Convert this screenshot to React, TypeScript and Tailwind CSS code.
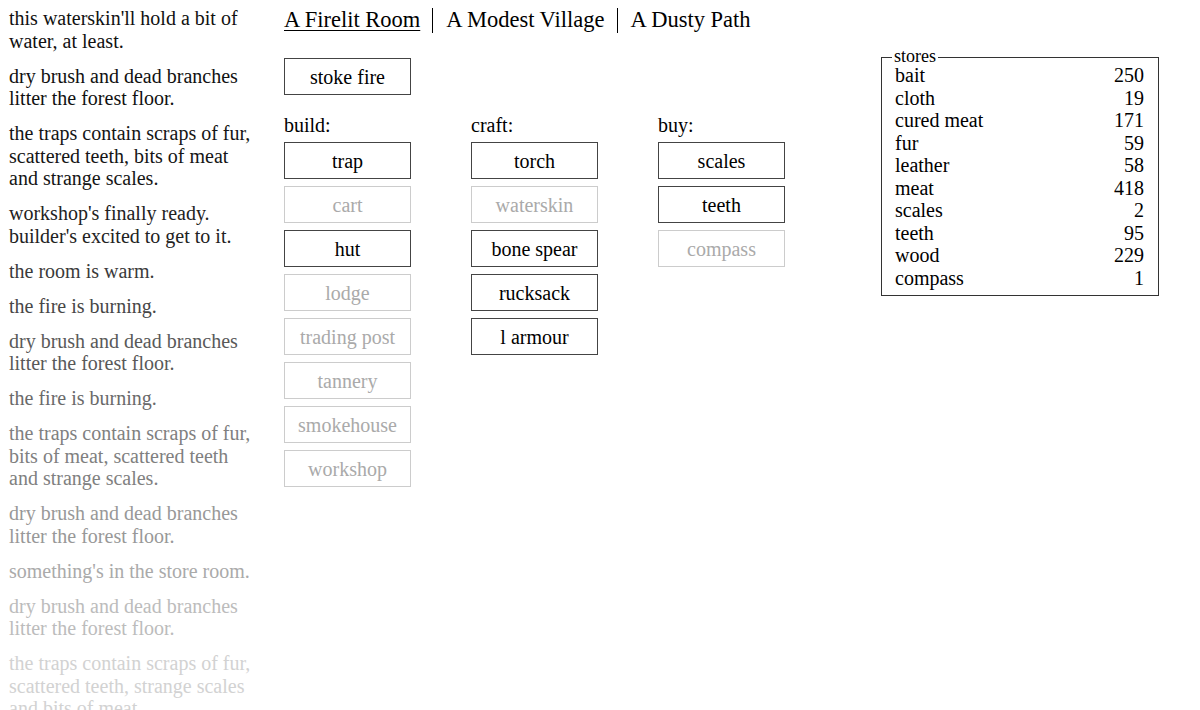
const notes: { text: string; color: string }[] = [
	{ text: "this waterskin'll hold a bit of water, at least.", color: "text-[#111]" },
	{ text: "dry brush and dead branches litter the forest floor.", color: "text-[#111]" },
	{ text: "the traps contain scraps of fur, scattered teeth, bits of meat and strange scales.", color: "text-[#151515]" },
	{ text: "workshop's finally ready. builder's excited to get to it.", color: "text-[#222]" },
	{ text: "the room is warm.", color: "text-[#3a3a3a]" },
	{ text: "the fire is burning.", color: "text-[#474747]" },
	{ text: "dry brush and dead branches litter the forest floor.", color: "text-[#595959]" },
	{ text: "the fire is burning.", color: "text-[#6a6a6a]" },
	{ text: "the traps contain scraps of fur, bits of meat, scattered teeth and strange scales.", color: "text-[#808080]" },
	{ text: "dry brush and dead branches litter the forest floor.", color: "text-[#989898]" },
	{ text: "something's in the store room.", color: "text-[#aaa]" },
	{ text: "dry brush and dead branches litter the forest floor.", color: "text-[#bcbcbc]" },
	{ text: "the traps contain scraps of fur, scattered teeth, strange scales and bits of meat.", color: "text-[#d2d2d2]" },
];

type Btn = { label: string; off?: boolean };

const build: Btn[] = [
	{ label: "trap" },
	{ label: "cart", off: true },
	{ label: "hut" },
	{ label: "lodge", off: true },
	{ label: "trading post", off: true },
	{ label: "tannery", off: true },
	{ label: "smokehouse", off: true },
	{ label: "workshop", off: true },
];

const craft: Btn[] = [
	{ label: "torch" },
	{ label: "waterskin", off: true },
	{ label: "bone spear" },
	{ label: "rucksack" },
	{ label: "l armour" },
];

const buy: Btn[] = [
	{ label: "scales" },
	{ label: "teeth" },
	{ label: "compass", off: true },
];

const stores: [string, number][] = [
	["bait", 250],
	["cloth", 19],
	["cured meat", 171],
	["fur", 59],
	["leather", 58],
	["meat", 418],
	["scales", 2],
	["teeth", 95],
	["wood", 229],
	["compass", 1],
];

function Button({ label, off }: Btn) {
	return (
		<div
			className={
				off
					? "flex h-[37px] w-[127px] items-center justify-center border border-[#ccc] text-[20px] text-[#aaa]"
					: "flex h-[37px] w-[127px] items-center justify-center border border-[#444] text-[20px] text-black"
			}
		>
			{label}
		</div>
	);
}

function Column({ title, items }: { title: string; items: Btn[] }) {
	return (
		<div className="flex w-[187px] flex-col">
			<div className="mb-[6px] h-[22px] text-[20px] leading-[22px]">{title}</div>
			<div className="flex flex-col gap-[7px]">
				{items.map((b) => (
					<Button key={b.label} {...b} />
				))}
			</div>
		</div>
	);
}

export default function App() {
	return (
		<div className="flex h-[710px] w-[1200px] overflow-hidden bg-white font-['Liberation_Serif',serif] text-black">
			<div className="w-[275px] shrink-0 pl-[9px] pt-[7px]">
				<div className="w-[248px]">
					{notes.map((n, i) => (
						<p key={i} className={`mb-[12.5px] text-[20px] leading-[22.5px] ${n.color}`}>
							{n.text}
						</p>
					))}
				</div>
			</div>

			<div className="flex w-[606px] shrink-0 flex-col pl-[9px] pt-[7px]">
				<div className="flex h-[26px] items-center text-[22.5px] leading-[26px]">
					<span className="underline decoration-1 underline-offset-[3px]">A Firelit Room</span>
					<span className="ml-[12px] mr-[13px] h-[25px] w-px bg-black" />
					<span>A Modest Village</span>
					<span className="ml-[12px] mr-[13px] h-[25px] w-px bg-black" />
					<span>A Dusty Path</span>
				</div>
				<div className="mt-[25px]">
					<Button label="stoke fire" />
				</div>
				<div className="mt-[19px] flex">
					<Column title="build:" items={build} />
					<Column title="craft:" items={craft} />
					<Column title="buy:" items={buy} />
				</div>
			</div>

			<div className="pt-[57px]">
				<div className="relative w-[278px] border border-[#333] pb-[6px] pl-[13px] pr-[14px] pt-[6px]">
					<span className="absolute left-[10px] top-[-12px] bg-white px-[2px] text-[18px] leading-[20px]">
						stores
					</span>
					{stores.map(([name, qty]) => (
						<div key={name} className="flex justify-between text-[20px] leading-[22.5px]">
							<span>{name}</span>
							<span>{qty}</span>
						</div>
					))}
				</div>
			</div>
		</div>
	);
}
